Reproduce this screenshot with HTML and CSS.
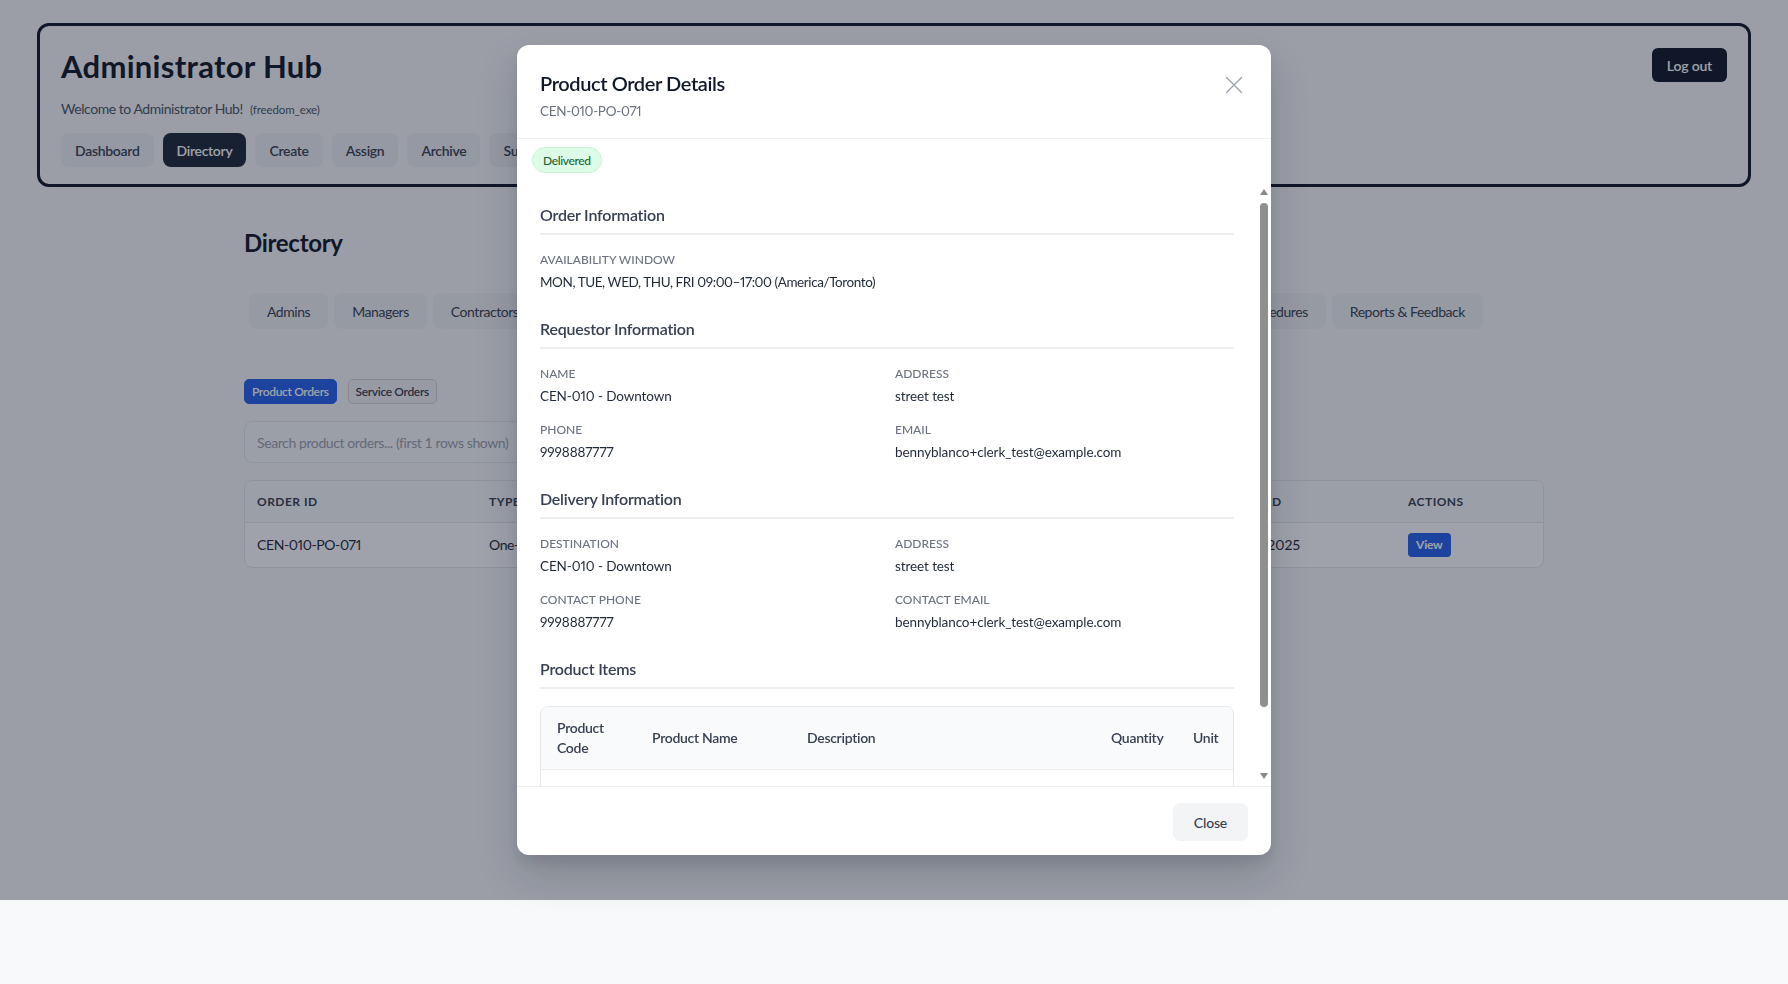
FILE: index.html
```html
<!DOCTYPE html>
<html lang="en">
<head>
<meta charset="utf-8">
<title>Administrator Hub</title>
<link rel="stylesheet" href="styles.css">
</head>
<body>
<div class="page">
  <header class="hub-card">
    <div class="hub-main">
      <h1 class="hub-title">Administrator Hub</h1>
      <p class="welcome">Welcome to Administrator Hub! <span class="user">(freedom_exe)</span></p>
      <nav class="main-nav">
        <button class="nav-btn">Dashboard</button>
        <button class="nav-btn active">Directory</button>
        <button class="nav-btn">Create</button>
        <button class="nav-btn">Assign</button>
        <button class="nav-btn">Archive</button>
        <button class="nav-btn">Support</button>
      </nav>
    </div>
    <button class="logout">Log out</button>
  </header>

  <main class="directory">
    <h2 class="dir-title">Directory</h2>
    <div class="subtabs">
      <div class="tab-group">
        <button class="subtab">Admins</button>
        <button class="subtab">Managers</button>
        <button class="subtab">Contractors</button>
        <button class="subtab">Clerks</button>
        <button class="subtab">Centers</button>
        <button class="subtab">Products</button>
      </div>
      <div class="tab-group">
        <button class="subtab">Procedures</button>
        <button class="subtab">Reports &amp; Feedback</button>
      </div>
    </div>
    <div class="order-toggle">
      <button class="toggle on">Product Orders</button>
      <button class="toggle">Service Orders</button>
    </div>
    <input class="search" type="text" placeholder="Search product orders... (first 1 rows shown)">
    <div class="table-card">
      <table class="orders">
        <thead>
          <tr>
            <th class="c-id">Order ID</th>
            <th class="c-type">Type</th>
            <th class="c-center">Center</th>
            <th class="c-status">Status</th>
            <th class="c-date">Ordered</th>
            <th class="c-act">Actions</th>
          </tr>
        </thead>
        <tbody>
          <tr>
            <td>CEN-010-PO-071</td>
            <td>One-time</td>
            <td>CEN-010</td>
            <td>Delivered</td>
            <td class="date">Oct 15, 2025</td>
            <td><button class="view">View</button></td>
          </tr>
        </tbody>
      </table>
    </div>
  </main>
</div>

<div class="overlay">
  <div class="modal">
    <div class="modal-head">
      <div>
        <h3 class="modal-title">Product Order Details</h3>
        <p class="modal-sub">CEN-010-PO-071</p>
      </div>
      <button class="x-btn" aria-label="Close">
        <svg width="18" height="18" viewBox="0 0 18 18" fill="none" stroke="currentColor" stroke-width="1.4" stroke-linecap="round"><path d="M1.5 1.5L16.5 16.5M16.5 1.5L1.5 16.5"/></svg>
      </button>
    </div>
    <div class="badge-row"><span class="badge">Delivered</span></div>
    <div class="modal-body">
      <div class="body-scroll">
        <section class="sec">
          <h4 class="sec-title">Order Information</h4>
          <div class="fields one">
            <div class="field">
              <div class="f-label">Availability Window</div>
              <div class="f-value tight">MON, TUE, WED, THU, FRI 09:00–17:00 (America/Toronto)</div>
            </div>
          </div>
        </section>
        <section class="sec">
          <h4 class="sec-title">Requestor Information</h4>
          <div class="fields">
            <div class="field"><div class="f-label">Name</div><div class="f-value">CEN-010 - Downtown</div></div>
            <div class="field"><div class="f-label">Address</div><div class="f-value">street test</div></div>
            <div class="field"><div class="f-label">Phone</div><div class="f-value">9998887777</div></div>
            <div class="field"><div class="f-label">Email</div><div class="f-value">bennyblanco+clerk_test@example.com</div></div>
          </div>
        </section>
        <section class="sec">
          <h4 class="sec-title">Delivery Information</h4>
          <div class="fields">
            <div class="field"><div class="f-label">Destination</div><div class="f-value">CEN-010 - Downtown</div></div>
            <div class="field"><div class="f-label">Address</div><div class="f-value">street test</div></div>
            <div class="field"><div class="f-label">Contact Phone</div><div class="f-value">9998887777</div></div>
            <div class="field"><div class="f-label">Contact Email</div><div class="f-value">bennyblanco+clerk_test@example.com</div></div>
          </div>
        </section>
        <section class="sec last">
          <h4 class="sec-title">Product Items</h4>
          <div class="items-card">
            <table class="items">
              <thead>
                <tr>
                  <th class="i-code">Product Code</th>
                  <th class="i-name">Product Name</th>
                  <th class="i-desc">Description</th>
                  <th class="i-qty">Quantity</th>
                  <th class="i-unit">Unit</th>
                </tr>
              </thead>
              <tbody>
                <tr class="item-row">
                  <td></td>
                  <td></td>
                  <td></td>
                  <td></td>
                  <td></td>
                </tr>
              </tbody>
            </table>
          </div>
        </section>
      </div>
      <div class="scrollbar" aria-hidden="true">
        <span class="sb-arrow">
          <svg width="8" height="6" viewBox="0 0 8 6"><path d="M0 6H8L4 0Z" fill="#8a8a8a"/></svg>
        </span>
        <span class="sb-track"><span class="sb-thumb"></span></span>
        <span class="sb-arrow down">
          <svg width="8" height="6" viewBox="0 0 8 6"><path d="M0 0H8L4 6Z" fill="#8a8a8a"/></svg>
        </span>
      </div>
    </div>
    <div class="modal-foot">
      <button class="close-btn">Close</button>
    </div>
  </div>
</div>
</body>
</html>
```

FILE: styles.css
```css
* { box-sizing: border-box; }

html, body {
  margin: 0;
  padding: 0;
}

body {
  background: #f8f9fa;
  font-family: Lato, "Segoe UI", "Noto Sans", sans-serif;
  font-variant-numeric: proportional-nums;
  color: #111827;
  height: 984px;
  overflow: hidden;
}

button {
  font-family: inherit;
  font-variant-numeric: inherit;
  cursor: pointer;
}

.page {
  padding: 23px 37px 0;
}

/* ---------- header card ---------- */
.hub-card {
  border: 3px solid #111827;
  border-radius: 12px;
  padding: 21px 21px 17px 21px;
  display: flex;
  justify-content: space-between;
  align-items: flex-start;
}

.hub-title {
  margin: 0;
  font-size: 31px;
  line-height: 38px;
  font-weight: 700;
  letter-spacing: 0.3px;
  color: #111827;
}

.welcome {
  margin: 14px 0 0;
  font-size: 14px;
  line-height: 20px;
  letter-spacing: -0.45px;
  color: #4b5563;
}

.welcome .user {
  font-size: 11.5px;
  letter-spacing: -0.1px;
  color: #4b5563;
  margin-left: 4px;
}

.main-nav {
  display: flex;
  gap: 9px;
  margin-top: 13px;
}

.nav-btn {
  height: 34px;
  padding: 0 14px;
  border: none;
  border-radius: 8px;
  background: #eef0f3;
  color: #374151;
  font-size: 14px;
  font-weight: 600;
  letter-spacing: -0.3px;
}

.nav-btn.active {
  background: #1f2937;
  color: #fff;
}

.logout {
  margin-top: 1px;
  height: 34px;
  padding: 0 15px;
  border: none;
  border-radius: 6px;
  background: #111827;
  color: #fff;
  font-size: 14px;
  font-weight: 600;
  letter-spacing: -0.2px;
}

/* ---------- directory ---------- */
.directory {
  width: 1300px;
  margin: 0 auto;
  padding-top: 40px;
}

.dir-title {
  margin: 0;
  font-size: 24px;
  line-height: 32px;
  font-weight: 700;
  letter-spacing: -0.3px;
  color: #111827;
}

.subtabs {
  display: flex;
  justify-content: space-between;
  width: 1234px;
  margin: 34px 0 0 5px;
}

.tab-group {
  display: flex;
  gap: 6px;
}

.subtab {
  height: 36px;
  padding: 0 18px;
  border: none;
  border-radius: 8px;
  background: #f1f2f4;
  color: #374151;
  font-size: 14px;
  font-weight: 400;
  letter-spacing: -0.45px;
}

.order-toggle {
  display: flex;
  gap: 11px;
  margin-top: 50px;
}

.toggle {
  height: 25px;
  padding: 0 7px;
  border: 1px solid #d1d5db;
  border-radius: 5px;
  background: #f3f4f6;
  color: #374151;
  font-size: 12px;
  font-weight: 600;
  letter-spacing: -0.35px;
}

.toggle.on {
  background: #2563eb;
  border-color: #2563eb;
  color: #fff;
}

.search {
  display: block;
  margin-top: 17px;
  width: 640px;
  height: 42px;
  padding: 0 12px;
  border: 1px solid #e5e7eb;
  border-radius: 8px;
  background: #f9fafb;
  font-family: inherit;
  font-size: 14px;
  letter-spacing: -0.4px;
  color: #111827;
}

.search::placeholder {
  color: #9ca3af;
}

.table-card {
  margin-top: 17px;
  border: 1px solid #e5e7eb;
  border-radius: 8px;
  overflow: hidden;
  background: #fff;
}

.orders {
  width: 100%;
  border-collapse: collapse;
  table-layout: fixed;
}

.orders th {
  text-align: left;
  height: 41px;
  padding: 0 12px;
  font-size: 12px;
  font-weight: 700;
  letter-spacing: 0.04em;
  text-transform: uppercase;
  color: #374151;
  background: #f9fafb;
  border-bottom: 1px solid #e5e7eb;
}

.orders td {
  height: 45px;
  padding: 0 12px;
  font-size: 14px;
  letter-spacing: -0.4px;
  color: #1f2937;
}

.orders td.date {
  letter-spacing: 0;
}

.c-id { width: 232px; }
.c-type { width: 250px; }
.c-center { width: 380px; }
.c-status { width: 102px; }
.c-date { width: 187px; }

.view {
  height: 24px;
  padding: 0 8px;
  border: none;
  border-radius: 4px;
  background: #2563eb;
  color: #fff;
  font-size: 12px;
  font-weight: 700;
  letter-spacing: -0.2px;
}

/* ---------- overlay & modal ---------- */
.overlay {
  position: fixed;
  left: 0;
  top: 0;
  width: 100%;
  height: 900px;
  background: rgba(15, 23, 42, 0.4);
  display: flex;
  align-items: center;
  justify-content: center;
}

.modal {
  width: 754px;
  height: 90%;
  background: #fff;
  border-radius: 12px;
  display: flex;
  flex-direction: column;
  overflow: hidden;
  box-shadow: 0 20px 40px rgba(15, 23, 42, 0.18), 0 8px 12px rgba(15, 23, 42, 0.08);
}

.modal-head {
  display: flex;
  justify-content: space-between;
  align-items: flex-start;
  padding: 24px 24px 17px 23px;
  border-bottom: 1px solid #f0f1f3;
}

.modal-title {
  margin: 0;
  font-size: 20px;
  line-height: 28px;
  font-weight: 600;
  letter-spacing: -0.4px;
  color: #111827;
}

.modal-sub {
  margin: 4px 0 0;
  font-size: 13.5px;
  line-height: 20px;
  letter-spacing: -0.3px;
  color: #6b7280;
}

.x-btn {
  margin-top: 3px;
  padding: 4px;
  border: none;
  background: none;
  color: #9ca3af;
  display: flex;
}

.badge-row {
  padding: 8px 15px 11px;
}

.badge {
  display: inline-flex;
  align-items: center;
  height: 26px;
  padding: 0 10px;
  border: 1px solid #c7f3d4;
  border-radius: 999px;
  background: #dcfce7;
  color: #166534;
  font-size: 12px;
  font-weight: 500;
  letter-spacing: -0.35px;
}

.modal-body {
  flex: 1;
  min-height: 0;
  display: flex;
}

.body-scroll {
  flex: 1;
  min-width: 0;
  overflow: hidden;
  padding: 19px 22px 0 23px;
}

.scrollbar {
  width: 15px;
  flex: none;
  display: flex;
  flex-direction: column;
}

.sb-arrow {
  height: 15px;
  display: flex;
  align-items: center;
  justify-content: center;
}

.sb-arrow.down {
  margin-bottom: 3px;
}

.sb-track {
  flex: 1;
  padding: 4px 3.5px;
}

.sb-thumb {
  display: block;
  height: 504px;
  background: #8f8f8f;
  border-radius: 4px;
}

.sec {
  margin-bottom: 25px;
}

.sec.last {
  margin-bottom: 0;
}

.sec-title {
  margin: 0 0 17px;
  padding-bottom: 6px;
  border-bottom: 2px solid #eceef1;
  font-size: 16px;
  line-height: 24px;
  font-weight: 600;
  letter-spacing: -0.22px;
  color: #374151;
}

.fields {
  display: grid;
  grid-template-columns: 1fr 1fr;
  gap: 16px;
}

.fields.one {
  grid-template-columns: 1fr;
}

.f-label {
  font-size: 12px;
  line-height: 16px;
  font-weight: 500;
  letter-spacing: 0;
  text-transform: uppercase;
  color: #6b7280;
  margin-bottom: 4px;
}

.f-value {
  font-size: 13.5px;
  line-height: 20px;
  letter-spacing: -0.1px;
  color: #1f2937;
}

.f-value.tight {
  letter-spacing: -0.42px;
}

.items-card {
  border: 1px solid #e5e7eb;
  border-radius: 8px;
  overflow: hidden;
}

.items {
  width: 100%;
  border-collapse: collapse;
  table-layout: fixed;
}

.items th {
  text-align: left;
  padding: 11px 16px;
  font-size: 14px;
  line-height: 20px;
  font-weight: 600;
  letter-spacing: -0.3px;
  color: #374151;
  background: #f9fafb;
  border-bottom: 1px solid #eceef1;
  vertical-align: middle;
}

.items td {
  height: 60px;
  padding: 20px 16px;
}

.i-code { width: 95px; }
.i-name { width: 155px; }
.i-desc { width: 304px; }
.i-qty { width: 82px; }
.i-unit { width: 58px; }

.modal-foot {
  display: flex;
  justify-content: flex-end;
  padding: 16px 23px 14px;
  border-top: 1px solid #eceef1;
}

.close-btn {
  height: 38px;
  padding: 0 21px;
  border: none;
  border-radius: 8px;
  background: #f3f4f6;
  color: #374151;
  font-size: 14px;
  font-weight: 500;
  letter-spacing: -0.2px;
}
```
